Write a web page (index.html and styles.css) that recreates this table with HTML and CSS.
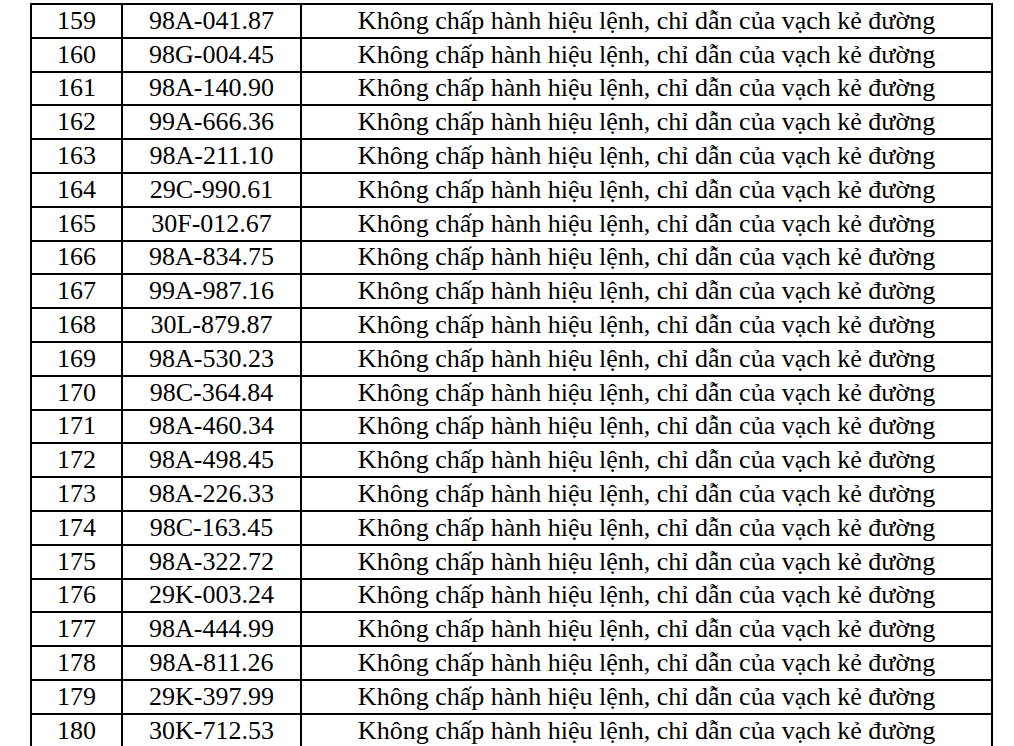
FILE: index.html
```html
<!DOCTYPE html>
<html lang="vi">
<head>
<meta charset="utf-8">
<title>Danh sách vi phạm</title>
<link rel="stylesheet" href="styles.css">
</head>
<body>
<table class="list">
<colgroup>
<col class="c-no">
<col class="c-plate">
<col class="c-err">
</colgroup>
<tbody>
<tr><td>159</td><td>98A-041.87</td><td>Không chấp hành hiệu lệnh, chỉ dẫn của vạch kẻ đường</td></tr>
<tr><td>160</td><td>98G-004.45</td><td>Không chấp hành hiệu lệnh, chỉ dẫn của vạch kẻ đường</td></tr>
<tr><td>161</td><td>98A-140.90</td><td>Không chấp hành hiệu lệnh, chỉ dẫn của vạch kẻ đường</td></tr>
<tr><td>162</td><td>99A-666.36</td><td>Không chấp hành hiệu lệnh, chỉ dẫn của vạch kẻ đường</td></tr>
<tr><td>163</td><td>98A-211.10</td><td>Không chấp hành hiệu lệnh, chỉ dẫn của vạch kẻ đường</td></tr>
<tr><td>164</td><td>29C-990.61</td><td>Không chấp hành hiệu lệnh, chỉ dẫn của vạch kẻ đường</td></tr>
<tr><td>165</td><td>30F-012.67</td><td>Không chấp hành hiệu lệnh, chỉ dẫn của vạch kẻ đường</td></tr>
<tr><td>166</td><td>98A-834.75</td><td>Không chấp hành hiệu lệnh, chỉ dẫn của vạch kẻ đường</td></tr>
<tr><td>167</td><td>99A-987.16</td><td>Không chấp hành hiệu lệnh, chỉ dẫn của vạch kẻ đường</td></tr>
<tr><td>168</td><td>30L-879.87</td><td>Không chấp hành hiệu lệnh, chỉ dẫn của vạch kẻ đường</td></tr>
<tr><td>169</td><td>98A-530.23</td><td>Không chấp hành hiệu lệnh, chỉ dẫn của vạch kẻ đường</td></tr>
<tr><td>170</td><td>98C-364.84</td><td>Không chấp hành hiệu lệnh, chỉ dẫn của vạch kẻ đường</td></tr>
<tr><td>171</td><td>98A-460.34</td><td>Không chấp hành hiệu lệnh, chỉ dẫn của vạch kẻ đường</td></tr>
<tr><td>172</td><td>98A-498.45</td><td>Không chấp hành hiệu lệnh, chỉ dẫn của vạch kẻ đường</td></tr>
<tr><td>173</td><td>98A-226.33</td><td>Không chấp hành hiệu lệnh, chỉ dẫn của vạch kẻ đường</td></tr>
<tr><td>174</td><td>98C-163.45</td><td>Không chấp hành hiệu lệnh, chỉ dẫn của vạch kẻ đường</td></tr>
<tr><td>175</td><td>98A-322.72</td><td>Không chấp hành hiệu lệnh, chỉ dẫn của vạch kẻ đường</td></tr>
<tr><td>176</td><td>29K-003.24</td><td>Không chấp hành hiệu lệnh, chỉ dẫn của vạch kẻ đường</td></tr>
<tr><td>177</td><td>98A-444.99</td><td>Không chấp hành hiệu lệnh, chỉ dẫn của vạch kẻ đường</td></tr>
<tr><td>178</td><td>98A-811.26</td><td>Không chấp hành hiệu lệnh, chỉ dẫn của vạch kẻ đường</td></tr>
<tr><td>179</td><td>29K-397.99</td><td>Không chấp hành hiệu lệnh, chỉ dẫn của vạch kẻ đường</td></tr>
<tr><td>180</td><td>30K-712.53</td><td>Không chấp hành hiệu lệnh, chỉ dẫn của vạch kẻ đường</td></tr>
</tbody>
</table>
</body>
</html>
```
FILE: styles.css
```css
html, body {
  margin: 0;
  padding: 0;
  background: #ffffff;
}
body {
  padding: 3px 0 0 30px;
  overflow: hidden;
  height: 746px;
  box-sizing: border-box;
}
.list {
  border-collapse: collapse;
  table-layout: fixed;
  width: 961px;
  font-family: "Liberation Serif", "Times New Roman", serif;
  font-size: 26px;
  color: #000;
}
.c-no { width: 91px; }
.c-plate { width: 179px; }
.c-err { width: 691px; }
.list td {
  border: 2px solid #000;
  height: 33.8px;
  padding: 0;
  text-align: center;
  vertical-align: middle;
  line-height: 1;
  white-space: nowrap;
  box-sizing: border-box;
}
```
